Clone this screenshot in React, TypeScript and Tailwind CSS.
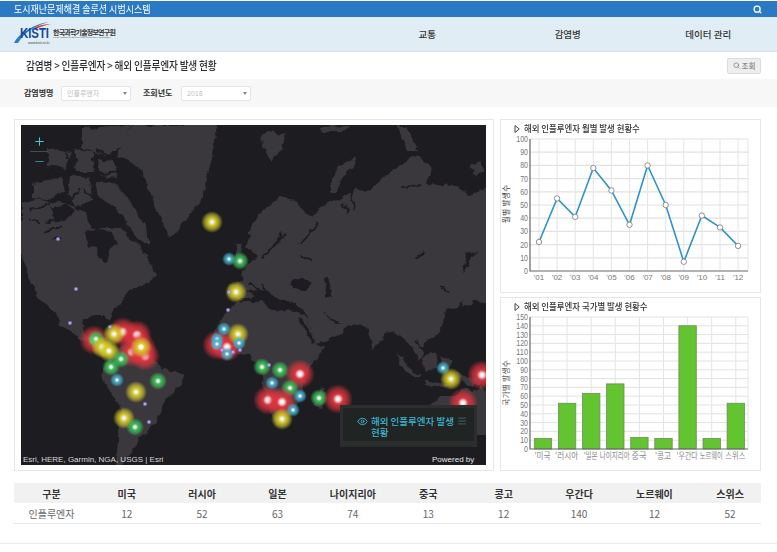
import { Search, Eye, Menu, Plus, Minus } from "lucide-react";

const menus = ["교통", "감염병", "데이터 관리"];

const columns = ["구분", "미국", "러시아", "일본", "나이지리아", "중국", "콩고", "우간다", "노르웨이", "스위스"];
const values = ["인플루엔자", "12", "52", "63", "74", "13", "12", "140", "12", "52"];

const monthly = [22, 55, 41, 78, 61, 35, 80, 50, 7, 42, 33, 19];
const years = ["'01", "'02", "'03", "'04", "'05", "'06", "'07", "'08", "'09", "'10", "'11", "'12"];
const bars = [
  { name: "'미국", v: 12, w: 16 },
  { name: "'러시아", v: 52, w: 23 },
  { name: "'일본", v: 63, w: 14 },
  { name: "나이지리아", v: 74, w: 30 },
  { name: "중국", v: 13, w: 15 },
  { name: "'콩고", v: 12, w: 16 },
  { name: "'우간다", v: 140, w: 21 },
  { name: "노르웨이", v: 12, w: 23 },
  { name: "스위스", v: 52, w: 20 },
];

// land outlines, in page pixels
const land = [
  // greenland
  "133,125 217,125 214,150 207,178 205,195 190,215 170,238 163,224 158,212 150,192 143,172 128,160 117,156 124,140",
  // north america
  "21,203 36,199 55,203 70,204 84,214 92,228 120,228 130,240 141,246 150,262 156,275 146,285 130,290 122,300 112,310 109,322 105,315 95,315 84,319 82,330 92,343 105,352 110,352 80,338 62,326 53,312 37,295 28,272 21,258",
  // arctic islands
  "82,128 132,125 122,145 108,157 82,148",
  "48,148 72,152 65,168 48,165",
  "35,182 62,178 65,192 45,200 32,197",
  "75,150 92,152 95,172 78,172",
  "70,176 90,178 92,200 76,206 68,192",
  "95,182 115,183 138,215 132,225 115,208 98,195",
  "98,160 113,162 118,178 100,176",
  "118,190 128,198 146,226 148,244 138,240 120,212",
  // south america
  "110,352 125,345 150,355 160,368 184,375 183,382 165,400 155,422 140,440 128,458 122,465 116,465 118,440 120,410 112,395 102,375",
  // africa
  "227,310 240,303 262,300 285,303 296,312 308,318 315,345 325,347 310,367 306,378 302,397 282,427 272,416 268,400 263,383 260,370 250,355 220,353 212,340 217,327",
  // madagascar
  "322,388 326,392 320,408 315,405",
  // eurasia
  "250,232 256,218 268,206 283,195 296,203 310,215 325,205 343,198 357,188 366,192 383,178 400,165 417,155 432,168 425,184 457,185 467,195 490,187 490,245 467,255 463,275 470,262 478,248 490,246 490,300 480,303 470,296 462,303 452,310 447,307 443,323 438,334 424,342 420,362 413,347 404,340 396,332 387,330 373,350 367,327 347,323 343,333 315,345 308,318 296,303 270,300 255,297 240,298 228,296 228,286 242,283 243,270 258,256 246,246 252,236",
  // britain
  "236,242 241,246 243,256 236,258",
  // novaya zemlya, svalbard and others
  "355,158 357,164 343,176 337,192 331,192 331,178 342,164",
  "260,136 268,132 286,134 282,148 272,162 264,150",
  "320,127 350,126 345,132 325,132",
  "397,125 408,128 418,150 408,150 402,138",
  "470,166 480,162 485,170 475,176",
  // japan
  "472,290 478,284 480,290 470,304 462,308 464,300",
  // southeast asia islands
  "422,356 436,352 438,366 426,372",
  "396,352 408,366 420,376 412,376 400,366",
  "442,356 452,362 446,372",
  "425,380 448,385 445,388 425,384",
  "456,372 474,378 484,386 468,386",
  // australia
  "430,404 444,396 456,396 462,388 472,392 482,386 490,396 490,435 440,435",
];

const channels = [
  "M46 172L70 174M66 152L75 178M92 175L120 172M95 150L118 160M68 205L80 188M50 204L30 210",
  "M44 232L62 226M66 216L46 222M52 240L60 236M40 224L30 218M84 190L98 200M104 178L92 158M60 170L48 178",
  "M282 233L277 245L262 258M286 234L268 252M312 262L300 255M300 244L318 224",
  "M248 282L262 292L275 300L290 302M262 284L270 298",
  "M354 210L350 190M348 214L343 202M400 188L420 186M440 285L450 295M416 340L424 352",
];

const lakes = [
  // hudson bay
  "85,232 96,228 112,232 118,244 110,250 107,262 100,258 96,248 88,246",
  // black sea, caspian, persian gulf
  "290,283 300,277 312,282 306,290 294,289",
  "322,278 328,277 332,290 330,298 325,296 326,286",
  "323,313 331,318 342,324 336,324",
  // red sea
  "298,317 303,319 315,343 312,345",
  // mediterranean
  "245,291 262,290 272,296 284,302 302,308 300,311 270,310 262,300",
  // baikal, slave lakes
  "416,258 423,250 423,253 418,260",
  "50,208 68,204 74,210 66,222 54,218",
];

type Dot = [number, number, "r" | "y" | "g" | "b" | "s"];

const dots: Dot[] = [
  [212, 222, "y"], [229, 259, "b"], [240, 261, "g"], [236, 292, "y"],
  [123, 332, "r"], [137, 335, "r"], [94, 340, "r"], [132, 352, "r"], [145, 356, "r"], [141, 347, "r"],
  [114, 334, "y"], [96, 339, "g"], [102, 347, "y"], [109, 351, "y"], [141, 347, "y"],
  [121, 359, "g"], [111, 367, "g"], [117, 380, "b"], [158, 381, "g"], [136, 392, "y"], [124, 418, "y"], [135, 427, "g"],
  [217, 345, "r"], [227, 347, "r"], [238, 334, "y"], [224, 329, "b"], [217, 339, "b"], [217, 344, "b"], [239, 343, "b"], [227, 354, "b"],
  [262, 367, "g"], [280, 370, "g"], [300, 374, "r"], [272, 383, "b"], [290, 388, "g"], [300, 396, "b"],
  [268, 400, "r"], [282, 402, "r"], [293, 410, "b"], [282, 419, "y"], [319, 398, "g"], [338, 399, "r"],
  [443, 368, "b"], [451, 379, "y"], [482, 375, "r"], [463, 403, "r"],
  [58, 239, "s"], [76, 289, "s"], [70, 323, "s"], [110, 327, "s"], [145, 404, "s"], [149, 422, "s"], [228, 310, "s"], [229, 292, "s"],
  [222, 350, "s"], [233, 352, "s"], [240, 350, "s"], [269, 365, "s"],
];

const dotRadius = { r: 15, y: 11, g: 9, b: 7, s: 2.5 };
const dotFill = { r: "url(#glowRed)", y: "url(#glowYellow)", g: "url(#glowGreen)", b: "url(#glowBlue)", s: "url(#glowSmall)" };

function Glow({ id, color }: { id: string; color: string }) {
  return (
    <radialGradient id={id}>
      <stop offset="0%" stopColor="#ffffff" />
      <stop offset="13%" stopColor="#ffffff" stopOpacity="0.9" />
      <stop offset="34%" stopColor={color} stopOpacity="0.95" />
      <stop offset="66%" stopColor={color} stopOpacity="0.6" />
      <stop offset="100%" stopColor={color} stopOpacity="0" />
    </radialGradient>
  );
}

function WorldMap() {
  return (
    <svg viewBox="21 125 465 340" className="block w-[465px] h-[340px]">
      <defs>
        <Glow id="glowRed" color="#e2353f" />
        <Glow id="glowYellow" color="#d8cf2a" />
        <Glow id="glowGreen" color="#3cc458" />
        <Glow id="glowBlue" color="#45b4d6" />
        <Glow id="glowSmall" color="#9c8ef0" />
        {/* roughens the straight polygon edges into coastlines */}
        <filter id="coast" x="-5%" y="-5%" width="110%" height="110%">
          <feTurbulence type="fractalNoise" baseFrequency="0.11" numOctaves="3" seed="4" result="noise" />
          <feDisplacementMap in="SourceGraphic" in2="noise" scale="7" xChannelSelector="R" yChannelSelector="G" />
          <feGaussianBlur stdDeviation="0.45" />
        </filter>
      </defs>
      <rect x="21" y="125" width="465" height="340" fill="#1d1c20" />
      <g filter="url(#coast)">
        {land.map((p) => (
          <polygon key={p} points={p} fill="#3a393d" />
        ))}
        {lakes.map((p) => (
          <polygon key={p} points={p} fill="#1d1c20" />
        ))}
        {channels.map((d) => (
          <path key={d} d={d} stroke="#1d1c20" strokeWidth="2" fill="none" />
        ))}
      </g>
      <g className="blur-[0.6px]">
        {dots.map(([x, y, k], i) => (
          <circle key={i} cx={x} cy={y} r={dotRadius[k]} fill={dotFill[k]} />
        ))}
      </g>
    </svg>
  );
}

function ChartTitle({ text }: { text: string }) {
  return (
    <div className="flex items-center h-[17px] pl-[13px] text-[9.5px] text-[#333] font-medium leading-none">
      <svg width="6" height="8" viewBox="0 0 6 8" className="mr-[4px] shrink-0">
        <path d="M1 0.5V7.5L5.2 4Z" fill="#fff" stroke="#444" strokeWidth="1" />
      </svg>
      <span className="inline-block origin-left scale-x-[0.885] whitespace-nowrap">{text}</span>
    </div>
  );
}

function Tick({ x, y, n }: { x: number; y: number; n: number }) {
  return (
    <text x={x} y={y} textAnchor="end" fontSize="9" fill="#777" fontFamily="Liberation Sans" textLength={String(n).length * 3.9} lengthAdjust="spacingAndGlyphs">
      {n}
    </text>
  );
}

function LineChart() {
  const x = (i: number) => 538 + i * 18.1;
  const y = (v: number) => 271 - v * 1.32;
  return (
    <svg viewBox="500 137 259 155" className="block w-[259px] h-[155px] overflow-visible">
      {Array.from({ length: 10 }).map((_, i) => (
        <line key={i} x1="529" x2="747" y1={y((i + 1) * 10)} y2={y((i + 1) * 10)} stroke="#e2e2e2" strokeWidth="1.2" />
      ))}
      {years.map((_, i) => (
        <line key={i} x1={x(i)} x2={x(i)} y1="139" y2="271" stroke="#e4e4e4" />
      ))}
      <line x1="747" x2="747" y1="139" y2="271" stroke="#e4e4e4" />
      <path d="M529 139V271H747" fill="none" stroke="#666" strokeWidth="1.2" />
      {Array.from({ length: 11 }).map((_, i) => (
        <Tick key={i} x={527} y={y(i * 10) + 3} n={i * 10} />
      ))}
      {years.map((t, i) => (
        <text key={t} x={x(i)} y="280" textAnchor="middle" fontSize="8" fill="#777" fontFamily="Liberation Sans">
          {t}
        </text>
      ))}
      <polyline points={monthly.map((v, i) => `${x(i)},${y(v)}`).join(" ")} fill="none" stroke="#2f93c8" strokeWidth="1.6" />
      {monthly.map((v, i) => (
        <circle key={i} cx={x(i)} cy={y(v)} r="2.7" fill="#fff" stroke="#777" strokeWidth="0.8" />
      ))}
      <text transform="translate(508 204) rotate(-90)" textAnchor="middle" fontSize="8" fill="#444">
        월별 발생수
      </text>
    </svg>
  );
}

function BarChart() {
  const y = (v: number) => 449 - v * 0.88;
  return (
    <svg viewBox="500 315 259 155" className="block w-[259px] h-[155px] overflow-visible">
      {Array.from({ length: 15 }).map((_, i) => (
        <line key={i} x1="529" x2="747" y1={y((i + 1) * 10)} y2={y((i + 1) * 10)} stroke="#e2e2e2" />
      ))}
      {bars.map((_, i) => (
        <line key={i} x1={542 + i * 24.1} x2={542 + i * 24.1} y1="317" y2="449" stroke="#e4e4e4" />
      ))}
      <line x1="747" x2="747" y1="317" y2="449" stroke="#e4e4e4" />
      {bars.map((b, i) => (
        <rect key={b.name} x={533.3 + i * 24.1} y={y(b.v)} width="17.4" height={449 - y(b.v)} fill="#62c42e" stroke="#6f8a5e" strokeWidth="0.8" />
      ))}
      <path d="M529 317V449H747" fill="none" stroke="#666" strokeWidth="1.2" />
      {Array.from({ length: 16 }).map((_, i) => (
        <Tick key={i} x={527} y={y(i * 10) + 3} n={i * 10} />
      ))}
      {bars.map((b, i) => (
        <text key={b.name} x={541.5 + i * 24.1} y="459" textAnchor="middle" fontSize="9" fill="#888" textLength={b.w} lengthAdjust="spacingAndGlyphs">
          {b.name}
        </text>
      ))}
      <text transform="translate(508 383) rotate(-90)" textAnchor="middle" fontSize="8" fill="#555">
        국가별 발생수
      </text>
    </svg>
  );
}

function Logo() {
  return (
    <svg width="38" height="24" viewBox="0 0 38 24" className="block shrink-0 overflow-visible">
      <path d="M0 21C5 11 20 2 35 0C24 3 11 9 4 21Z" fill="#2c7fc4" />
      <path d="M20 6C25 3 31 2 37 2C31 3 26 5 22 7Z" fill="#d9413a" />
      <text x="6" y="16" fontFamily="Liberation Sans" fontSize="14" fontWeight="700" fill="#14489a" textLength="29" lengthAdjust="spacingAndGlyphs">
        KISTI
      </text>
      <text x="14" y="21.5" fontFamily="Liberation Sans" fontSize="3.4" fill="#444">
        www.kisti.re.kr
      </text>
    </svg>
  );
}

function Select({ text }: { text: string }) {
  return (
    <div className="flex items-center justify-between w-[70px] h-[15px] bg-white border border-[#e4e4e4] rounded-[2px] pl-[5px] pr-[3px] text-[7px] font-normal text-[#bdbdbd]">
      <span>{text}</span>
      <svg width="4" height="3" viewBox="0 0 4 3">
        <path d="M0 0H4L2 3Z" fill="#888" />
      </svg>
    </div>
  );
}

export default function App() {
  return (
    <div className="w-[777px] h-[552px] overflow-hidden bg-white text-[#333] font-['Noto_Sans_CJK_KR',sans-serif]">
      <header className="mt-[1px] h-[16px] bg-[#2a79c3] flex items-center justify-between pl-[14px] pr-[15px] text-white text-[10px] leading-none">
        <span className="inline-block origin-left scale-x-[0.9]">도시재난문제해결 솔루션 시범시스템</span>
        <Search size={9} strokeWidth={3.5} />
      </header>

      <nav className="h-[35px] bg-[#e1edf4] border-b border-[#d6e0e6] flex items-center pl-[14px]">
        <Logo />
        <div className="w-[62px] ml-[1px] shrink-0 leading-none">
          <div className="text-[7px] font-bold text-[#333] tracking-[-0.8px] whitespace-nowrap">한국과학기술정보연구원</div>
          <div className="text-[2.4px] text-[#555] mt-[1px] whitespace-nowrap font-['Liberation_Sans']">Korea Institute of Science and Technology Information</div>
        </div>
        <div className="ml-[242px] flex text-[9.5px] font-medium text-[#333]">
          {menus.map((m) => (
            <div key={m} className="w-[140.5px] text-center">
              {m}
            </div>
          ))}
        </div>
      </nav>

      <div className="h-[27px] flex items-center justify-between pl-[26px] pr-[16px]">
        <div className="inline-block origin-left scale-x-[0.88] whitespace-nowrap text-[11px] font-medium text-[#2c2c2c] tracking-[-0.2px]">
          감염병 &gt; 인플루엔자 &gt; 해외 인플루엔자 발생 현황
        </div>
        <button className="flex items-center justify-center gap-[2px] w-[34px] h-[16px] bg-[#eeeeee] border border-[#dddddd] rounded-[2px] text-[7.5px] text-[#666]">
          <Search size={7} strokeWidth={2} />
          조회
        </button>
      </div>

      <div className="h-[28px] bg-[#f7f7f7] flex items-center pl-[24px] text-[8px] font-bold text-[#333]">
        <span className="w-[37px]">감염병명</span>
        <Select text="인플루엔자" />
        <span className="ml-[12px] w-[38px]">조회년도</span>
        <Select text="2018" />
      </div>

      <main className="flex gap-[6px] pl-[14px] pt-[12px]">
        <div className="relative w-[480px] h-[352px] border border-[#e6e6e6] pl-[6px] pt-[5px]">
          <WorldMap />
          <div className="absolute left-[18px] top-[15px] text-[#49c8d4]">
            <Plus size={13} strokeWidth={2} />
            <div className="my-[3px] h-px w-[18px] -ml-[3px] bg-[#4a4a4e]" />
            <Minus size={13} strokeWidth={1.8} className="text-[#2f8f8f]" />
          </div>
          <div className="absolute left-[8px] bottom-[6px] text-[8px] leading-none text-[#d8d8d8] font-['Liberation_Sans']">
            Esri, HERE, Garmin, NGA, USGS | Esri
          </div>
          <div className="absolute left-[417px] bottom-[6px] text-[8px] leading-none text-[#e4e4e4] font-['Liberation_Sans']">Powered by</div>
          <div className="absolute left-[325px] top-[285px] w-[137px] h-[42px] bg-[#2c2e2d] p-[3px]">
            <div className="flex h-[33px] bg-[#202423] text-[#3fb6d2] text-[9.5px] font-medium leading-[11px] pl-[14px] pt-[8px]">
              <Eye size={11} strokeWidth={2} className="mr-[3px] shrink-0" />
              <div className="w-[84px]">해외 인플루엔자 발생 현황</div>
              <Menu size={10} strokeWidth={1.2} className="ml-[2px] text-[#5aa7a7]" />
            </div>
          </div>
        </div>

        <div className="flex flex-col gap-[4px] w-[261px]">
          <section className="h-[174px] border border-[#e6e6e6]">
            <ChartTitle text="해외 인플루엔자 월별 발생 현황수" />
            <LineChart />
          </section>
          <section className="h-[174px] border border-[#e6e6e6]">
            <ChartTitle text="해외 인플루엔자 국가별 발생 현황수" />
            <BarChart />
          </section>
        </div>
      </main>

      <div className="mt-[12px] mx-[14px] w-[747px] border-b border-[#e6e6e6] text-[10px]">
        <div className="grid grid-cols-[75px_repeat(8,75.4px)_1fr] h-[20px] items-center bg-[#f1f1f1] font-bold text-[#333]">
          {columns.map((c, i) => (
            <div key={c} className={i === 9 ? "text-center pl-[7px]" : "text-center"}>
              {c}
            </div>
          ))}
        </div>
        <div className="grid grid-cols-[75px_repeat(8,75.4px)_1fr] h-[20px] items-center text-[#666]">
          {values.map((v, i) => (
            <div key={i} className={i === 9 ? "text-center pl-[7px]" : "text-center"}>
              {v}
            </div>
          ))}
        </div>
      </div>

      <div className="mt-[19px] h-px bg-[#ececec]" />
    </div>
  );
}
